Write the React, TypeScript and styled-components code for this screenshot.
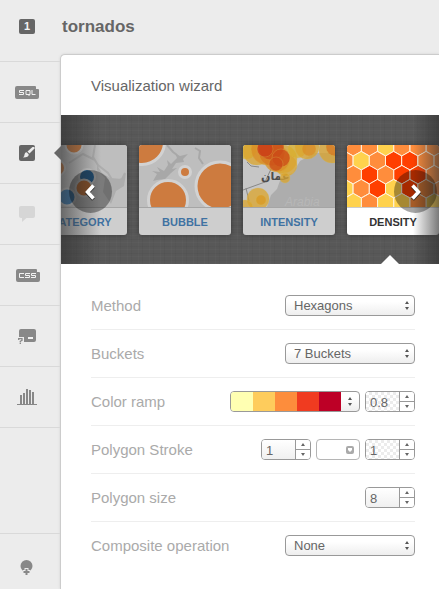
import React, { useState } from "react";
import styled, { createGlobalStyle, css } from "styled-components";

const GlobalStyle = createGlobalStyle`
  * { box-sizing: border-box; }
  body {
    margin: 0;
    background: #ececec;
    font-family: "Liberation Sans", Arial, Helvetica, sans-serif;
  }
  button, input, select { font-family: inherit; }
`;

const Page = styled.div`
  display: flex;
  min-height: 100vh;
`;

/* ---------- left tool rail ---------- */

const Rail = styled.nav`
  display: flex;
  flex-direction: column;
  flex: none;
  width: 60px;
`;

const RailButton = styled.button<{ $first?: boolean; $last?: boolean }>`
  position: relative;
  display: flex;
  align-items: center;
  justify-content: center;
  width: 100%;
  height: ${(p) => (p.$first ? 62 : 61)}px;
  padding: 0 6px 0 0;
  border: 0;
  border-bottom: 1px solid #d9d9d9;
  background: none;
  cursor: pointer;
  ${(p) => p.$first && css`padding-bottom: 8px;`}
  ${(p) =>
    p.$last &&
    css`
      height: 56px;
      margin-top: auto;
      padding: 12px 8px 0 0;
      border-top: 1px solid #d9d9d9;
      border-bottom: 0;
    `}
  svg { display: block; }
`;

const Pointer = styled.svg`
  position: absolute;
  z-index: 2;
  right: -1px;
  top: 23px;
`;

const NumberBadge = styled.span`
  width: 16px;
  height: 15px;
  border-radius: 2px;
  background: #666;
  color: #f4f4f4;
  font-size: 11px;
  font-weight: bold;
  line-height: 15px;
  text-align: center;
`;

/* ---------- main column ---------- */

const Main = styled.main`
  display: flex;
  flex-direction: column;
  flex: 1;
  min-width: 0;
`;

const Title = styled.h1`
  margin: 0;
  padding: 0 2px;
  height: 54px;
  color: #666;
  font-size: 17px;
  line-height: 53px;
`;

const Panel = styled.section`
  flex: 1;
  overflow: hidden;
  border: solid #ccc;
  border-width: 1px 0 0 1px;
  border-top-left-radius: 5px;
  background: #fff;
  box-shadow: 0 0 3px rgba(0, 0, 0, 0.1);
`;

const PanelTitle = styled.h2`
  margin: 0;
  padding: 0 30px;
  color: #666;
  font-size: 15px;
  font-weight: normal;
  line-height: 62px;
  height: 60px;
`;

const Carousel = styled.div`
  position: relative;
  height: 149px;
  padding: 30px 0;
  overflow: hidden;
  background:
    repeating-linear-gradient(90deg, rgba(255, 255, 255, 0.02) 0 1px, transparent 1px 4px, rgba(0, 0, 0, 0.03) 4px 5px, transparent 5px 11px),
    repeating-linear-gradient(0deg, rgba(255, 255, 255, 0.02) 0 1px, transparent 1px 3px, rgba(0, 0, 0, 0.03) 3px 4px, transparent 4px 7px),
    #585858;
`;

const Track = styled.div`
  display: flex;
  gap: 12px;
  margin-left: -26px;
`;

const Card = styled.button<{ $active: boolean }>`
  display: flex;
  flex-direction: column;
  flex: none;
  width: 92px;
  height: 90px;
  padding: 0;
  overflow: hidden;
  border: 0;
  border-radius: 3px;
  background: ${(p) => (p.$active ? "#fff" : "#cecece")};
  box-shadow: 0 0 5px rgba(0, 0, 0, 0.4);
  color: ${(p) => (p.$active ? "#333" : "#3f72a2")};
  cursor: pointer;
  svg { display: block; flex: none; }
`;

const CardName = styled.span<{ $active: boolean }>`
  width: 100%;
  border-top: 1px solid ${(p) => (p.$active ? "#ccc" : "#a5a5a5")};
  font-size: 11px;
  font-weight: bold;
  line-height: 28px;
  text-align: center;
`;

const Fade = styled.div<{ $side: "left" | "right" }>`
  position: absolute;
  top: 0;
  bottom: 0;
  ${(p) => p.$side}: 0;
  width: ${(p) => (p.$side === "left" ? 40 : 26)}px;
  background: linear-gradient(
    to ${(p) => p.$side},
    rgba(50, 50, 50, 0),
    rgba(50, 50, 50, 0.65)
  );
  pointer-events: none;
`;

const Arrow = styled.button<{ $side: "left" | "right" }>`
  position: absolute;
  top: 55px;
  ${(p) => (p.$side === "left" ? "left: 8px" : "right: 2px")};
  display: flex;
  align-items: center;
  justify-content: center;
  width: 43px;
  height: 43px;
  padding: 0;
  border: 0;
  border-radius: 50%;
  background: rgba(0, 0, 0, 0.35);
  cursor: pointer;
`;

const Notch = styled.svg`
  position: absolute;
  right: 40px;
  bottom: 0;
`;

/* ---------- form ---------- */

const Form = styled.form`
  padding: 18px 24px 16px 30px;
`;

const Row = styled.div`
  display: flex;
  align-items: center;
  justify-content: space-between;
  height: 48px;
  border-bottom: 1px solid #eee;
  &:last-child { border-bottom-color: transparent; }
`;

const RowLabel = styled.label`
  color: #aaa;
  font-size: 15px;
`;

const Controls = styled.div`
  display: flex;
  gap: 5px;
`;

const SelectBox = styled.div`
  position: relative;
  width: 130px;
  height: 21px;
  svg { position: absolute; right: 6px; top: 6px; pointer-events: none; }
`;

const Select = styled.select`
  width: 100%;
  height: 100%;
  padding: 0 20px 0 8px;
  appearance: none;
  border: 1px solid #999;
  border-radius: 4px;
  background: linear-gradient(#fff 30%, #eee);
  color: #666;
  font-size: 13px;
`;

const checks = css`
  background-color: #fff;
  background-image: repeating-conic-gradient(#ececec 0 25%, #fff 0 50%);
  background-size: 6px 6px;
`;

const SpinnerBox = styled.div`
  display: flex;
  width: 50px;
  height: 21px;
  overflow: hidden;
  border: 1px solid #999;
  border-radius: 4px;
`;

const SpinnerInput = styled.input<{ $checked?: boolean }>`
  flex: 1;
  min-width: 0;
  padding: 2px 0 0 4px;
  border: 0;
  color: #666;
  font-size: 13px;
  background: linear-gradient(#fff, #f0f0f0);
  ${(p) => p.$checked && checks}
`;

const Steps = styled.div`
  display: flex;
  flex-direction: column;
  width: 15px;
  border-left: 1px solid #999;
`;

const Step = styled.button`
  display: flex;
  flex: 1;
  align-items: center;
  justify-content: center;
  padding: 0;
  border: 0;
  background: #fff;
  & + & { border-top: 1px solid #999; }
`;

const Ramp = styled.button`
  display: flex;
  width: 130px;
  height: 21px;
  padding: 0;
  overflow: hidden;
  border: 1px solid #999;
  border-radius: 4px;
  background: linear-gradient(#fff 30%, #eee);
`;

const Swatch = styled.span<{ $color: string }>`
  width: 22px;
  height: 100%;
  background: ${(p) => p.$color};
`;

const RampArrows = styled.span`
  display: flex;
  flex: 1;
  align-items: center;
  justify-content: center;
  height: 100%;
`;

const ColorButton = styled.button`
  display: flex;
  align-items: center;
  justify-content: flex-end;
  width: 44px;
  height: 21px;
  padding: 0 5px;
  border: 1px solid #b5b5b5;
  border-radius: 4px;
  background: #fff;
`;

/* ---------- icons ---------- */

const SqlIcon = () => (
  <svg width="24" height="13" viewBox="0 0 24 13">
    <path d="M2 0h18q1 0 1 1v2h2q1 0 1 1v7q0 2-2 2H2q-2 0-2-2V2q0-2 2-2z" fill="#888" />
    <path d="M9 4.500H4.500v2H8.500v2H4M11 4.500h4v4h-4zM14 8.500v1.500M17 4v4.500h3.500" fill="none" stroke="#f2f2f2" />
  </svg>
);

const CssIcon = () => (
  <svg width="26" height="13" viewBox="-2 0 26 13">
    <path d="M2 0h18q1 0 1 1v2h2q1 0 1 1v7q0 2-2 2H2q-2 0-2-2V2q0-2 2-2z" fill="#888" />
    <path d="M8 4.500H3.500v4H8M14 4.500H9.500v2h4v2H9M20 4.500h-4.500v2h4v2H15" fill="none" stroke="#f2f2f2" />
  </svg>
);

const BrushIcon = () => (
  <svg width="16" height="16" viewBox="0 0 16 16">
    <rect width="16" height="16" rx="2" fill="#666" />
    <path d="M15 2 16 3 10.500 8.500 8.500 6.500 13.500 2z" fill="#ececec" />
    <path d="M7.700 7.300 9.700 9.300Q10 12.500 4 12.500 5.500 11.500 5.500 9.500 5.700 7.300 7.700 7.300z" fill="#ececec" />
  </svg>
);

const BubbleIcon = () => (
  <svg width="16" height="16" viewBox="0 0 16 16">
    <path d="M2 0h12q2 0 2 2v8q0 2-2 2H7.500L3 16v-4H2q-2 0-2-2V2q0-2 2-2z" fill="#d6d6d6" />
  </svg>
);

const HintIcon = () => (
  <svg width="18" height="15" viewBox="0 0 18 15">
    <path d="M3 0h13q2 0 2 2v9q0 2-2 2H6V8H1V2q0-2 2-2z" fill="#888" />
    <rect x="10" y="8" width="5" height="2" fill="#f2f2f2" />
    <path d="M.7 11V9.700h3.300v1.700L2.300 12.300v.9M2.300 13.800v1.200" fill="none" stroke="#888" strokeWidth="1.300" />
  </svg>
);

const BarsIcon = () => (
  <svg width="20" height="16" viewBox="0 0 20 16" fill="#888">
    <path d="M0 15h20v1H0zM3 6h2v9H3zM6 4h2v11H6zM9 0h2v15H9zM12 1h2v14h-2zM15 3h2v12h-2z" />
  </svg>
);

const AddIcon = () => (
  <svg width="13" height="16" viewBox="0 0 13 16">
    <circle cx="6.500" cy="6" r="6" fill="#888" />
    <path d="M6.500 8v8M2.500 12h8" stroke="#ececec" strokeWidth="4" />
    <path d="M6.500 9v6M3.500 12h6" stroke="#888" strokeWidth="2" />
  </svg>
);

const SelectArrows = () => (
  <svg width="4" height="9" viewBox="0 0 4 9" fill="#555">
    <path d="M0 3 2 0 4 3zM0 6h4L2 9z" />
  </svg>
);

const Tick = ({ up }: { up?: boolean }) => (
  <svg width="4" height="3" viewBox="0 0 4 3" fill="#666">
    <path d={up ? "M0 3 2 0 4 3z" : "M0 0h4L2 3z"} />
  </svg>
);

const Chevron = ({ left }: { left?: boolean }) => {
  const d = left ? "M10.500 2.500 4.500 9l6 6.500" : "M4.500 2.500 10.500 9l-6 6.500";
  return (
    <svg width="15" height="18" viewBox="0 0 15 18" fill="none">
      <path d={d} stroke="#222" strokeWidth="4" transform="translate(0 1)" opacity=".8" />
      <path d={d} stroke="#fff" strokeWidth="3.500" />
    </svg>
  );
};

/* ---------- card thumbnails ---------- */

const CategoryThumb = () => (
  <svg width="92" height="62" viewBox="0 0 92 62">
    <rect width="92" height="62" fill="#bebebe" />
    <path d="M60 0l-2 12 5 8 10 8 6 10 8-4 3-6M34 18l14-9 12 6" fill="none" stroke="#adadad" strokeWidth="2" />
    <path d="M62 20l5 8 8 5 12 1 4-6-2 13-8 5-5 13-8-12 2-14-8-8z" fill="#adadad" />
    <g stroke="#cfcfcf" strokeWidth="2">
      <circle cx="39" cy="0" r="8.500" fill="#cd7b3f" />
      <circle cx="22" cy="23" r="8" fill="#cd7b3f" />
      <circle cx="52" cy="32" r="8" fill="#2f6fa5" />
      <circle cx="49" cy="43" r="8.500" fill="#cd7b3f" />
      <circle cx="32" cy="52" r="8.500" fill="#3c7db5" />
    </g>
  </svg>
);

const BubbleThumb = () => (
  <svg width="92" height="62" viewBox="0 0 92 62">
    <rect width="92" height="62" fill="#bebebe" />
    <path d="M14 36l4-7-5-3 8 1-3-5 7 4 4-6-1-5 4 4 6-6-2-5 5 3 8-2-5 5 1 3-8 1-4 6 5-1-6 5-6 6-8 1z" fill="#a8a8a8" />
    <path d="M56 3l5 3-1 7 4 6M28 0l6 7 4 3" fill="none" stroke="#a8a8a8" strokeWidth="2" />
    <g fill="#cd7b3f" stroke="#d2d2d2" strokeWidth="3">
      <circle cx="3" cy="-3" r="22.500" />
      <circle cx="46" cy="27" r="5.500" />
      <circle cx="29" cy="55" r="19.500" />
      <circle cx="81" cy="41" r="24" />
    </g>
  </svg>
);

const ArabicText = styled.text`
  font: bold 11px "DejaVu Sans", sans-serif;
`;

const WatermarkText = styled.text`
  font: italic 12px "Liberation Sans", sans-serif;
`;

const heat: [number, number, number, string][] = [
  [3, 3, 11, "#d9b02c"], [14, 6, 14, "#dba42c"], [40, 14, 14, "#dba42c"],
  [43, 20, 11, "#dba42c"], [24, 4, 16, "#d98c25"], [34, 14, 13, "#d98c25"],
  [29, 8, 13, "#d47720"], [28, 2, 13, "#cb4b18"], [22, 4, 8, "#cb3f18"],
  [38, 13, 9, "#cb4b18"], [33, 19, 7, "#cb4b18"], [54, 4, 9, "#d9b02c"],
  [64, 2, 12, "#dba42c"], [66, 4, 7, "#d98c25"], [89, 5, 13, "#dba42c"],
  [92, 2, 9, "#d47720"], [42, 33, 5, "#dba42c"], [15, 54, 11, "#dba42c"],
  [18, 55, 5, "#d99a20"], [2, 63, 8, "#dba42c"],
];

const IntensityThumb = () => (
  <svg width="92" height="62" viewBox="0 0 92 62">
    <rect width="92" height="62" fill="#c6c6c6" />
    <path d="M24 62l4-12 6-6 4-11 12-5 7-12 15-8h20v54z" fill="#adadad" />
    <path d="M4 17l4 4 8 1M0 45l22-8 6-13M3 43l3 13" fill="none" stroke="#888" />
    <WatermarkText x="42" y="61" fill="#b7b7b7">Arabia</WatermarkText>
    <ArabicText x="18" y="35" fill="#4d4d4d" direction="ltr">عمان</ArabicText>
    {heat.map(([x, y, r, c], i) => (
      <circle key={i} cx={x} cy={y} r={r} fill={c} fillOpacity=".75" stroke="#d9b84b" strokeOpacity=".3" />
    ))}
  </svg>
);

const hexRows = ["OOYOOO", "OYORROO", "ORORROO", "YORYROO", "YOYYOYO"];
const hexFill: Record<string, string> = { O: "#ff8d3c", Y: "#ffd24d", R: "#ff3f00" };

const DensityThumb = () => (
  <svg width="92" height="62" viewBox="0 0 92 62" stroke="#fff3df">
    {hexRows.flatMap((row, r) =>
      [...row].map((c, i) => {
        const x = (r % 2 ? -2 : 6.3) + i * 16.2;
        const y = 1.7 + r * 14;
        return (
          <path
            key={`${r}-${i}`}
            d={`M${x} ${y - 9.3}l8.100 4.600v9.400l-8.100 4.600-8.100-4.600v-9.400z`}
            fill={hexFill[c]}
          />
        );
      })
    )}
  </svg>
);

const cards = [
  { name: "CATEGORY", Thumb: CategoryThumb },
  { name: "BUBBLE", Thumb: BubbleThumb },
  { name: "INTENSITY", Thumb: IntensityThumb },
  { name: "DENSITY", Thumb: DensityThumb },
];

const rampColors = ["#ffffb2", "#fecc5c", "#fd8d3c", "#f03b20", "#bd0026"];

/* ---------- controls ---------- */

function Dropdown({ id, options }: { id: string; options: string[] }) {
  return (
    <SelectBox>
      <Select id={id}>
        {options.map((o) => (
          <option key={o}>{o}</option>
        ))}
      </Select>
      <SelectArrows />
    </SelectBox>
  );
}

type SpinnerProps = { id?: string; label: string; initial: number; step?: number; checked?: boolean };

function Spinner({ id, label, initial, step = 1, checked }: SpinnerProps) {
  const [value, setValue] = useState(String(initial));
  const change = (by: number) =>
    setValue((v) => String(Math.round((Number(v) + by) * 10) / 10));
  return (
    <SpinnerBox>
      <SpinnerInput
        id={id}
        aria-label={id ? undefined : label}
        $checked={checked}
        value={value}
        onChange={(e) => setValue(e.target.value)}
      />
      <Steps>
        <Step type="button" aria-label={`Increase ${label}`} onClick={() => change(step)}>
          <Tick up />
        </Step>
        <Step type="button" aria-label={`Decrease ${label}`} onClick={() => change(-step)}>
          <Tick />
        </Step>
      </Steps>
    </SpinnerBox>
  );
}

export default function App() {
  const [active, setActive] = useState("DENSITY");
  return (
    <Page>
      <GlobalStyle />
      <Rail aria-label="Layer tools">
        <RailButton $first aria-label="Layer 1"><NumberBadge>1</NumberBadge></RailButton>
        <RailButton aria-label="SQL"><SqlIcon /></RailButton>
        <RailButton aria-label="Wizards">
          <BrushIcon />
          <Pointer width="7" height="14" viewBox="0 0 7 14">
            <path d="M7 0v14L0 7z" fill="#666" />
          </Pointer>
        </RailButton>
        <RailButton aria-label="Infowindow"><BubbleIcon /></RailButton>
        <RailButton aria-label="CSS"><CssIcon /></RailButton>
        <RailButton aria-label="Legends"><HintIcon /></RailButton>
        <RailButton aria-label="Filters"><BarsIcon /></RailButton>
        <RailButton $last aria-label="Add feature"><AddIcon /></RailButton>
      </Rail>
      <Main>
        <Title>tornados</Title>
        <Panel>
          <PanelTitle>Visualization wizard</PanelTitle>
          <Carousel>
            <Track>
              {cards.map(({ name, Thumb }) => (
                <Card key={name} type="button" $active={active === name} onClick={() => setActive(name)}>
                  <Thumb />
                  <CardName $active={active === name}>{name}</CardName>
                </Card>
              ))}
            </Track>
            <Fade $side="left" />
            <Fade $side="right" />
            <Arrow type="button" $side="left" aria-label="Previous"><Chevron left /></Arrow>
            <Arrow type="button" $side="right" aria-label="Next"><Chevron /></Arrow>
            <Notch width="18" height="9" viewBox="0 0 18 9">
              <path d="M0 9 9 0l9 9z" fill="#fff" />
            </Notch>
          </Carousel>
          <Form>
            <Row>
              <RowLabel htmlFor="method">Method</RowLabel>
              <Dropdown id="method" options={["Hexagons", "Rectangles"]} />
            </Row>
            <Row>
              <RowLabel htmlFor="buckets">Buckets</RowLabel>
              <Dropdown id="buckets" options={["7 Buckets", "5 Buckets", "3 Buckets"]} />
            </Row>
            <Row>
              <RowLabel htmlFor="ramp">Color ramp</RowLabel>
              <Controls>
                <Ramp id="ramp" type="button">
                  {rampColors.map((c) => (
                    <Swatch key={c} $color={c} />
                  ))}
                  <RampArrows><SelectArrows /></RampArrows>
                </Ramp>
                <Spinner label="ramp opacity" initial={0.8} step={0.1} checked />
              </Controls>
            </Row>
            <Row>
              <RowLabel htmlFor="stroke">Polygon Stroke</RowLabel>
              <Controls>
                <Spinner id="stroke" label="stroke width" initial={1} />
                <ColorButton type="button" aria-label="Stroke color">
                  <svg width="8" height="8" viewBox="0 0 8 8">
                    <rect width="8" height="8" rx="2" fill="#aaa" />
                    <path d="M2 2h4v2L4 6 2 4z" fill="#fff" />
                  </svg>
                </ColorButton>
                <Spinner label="stroke opacity" initial={1} step={0.1} checked />
              </Controls>
            </Row>
            <Row>
              <RowLabel htmlFor="size">Polygon size</RowLabel>
              <Spinner id="size" label="polygon size" initial={8} />
            </Row>
            <Row>
              <RowLabel htmlFor="operation">Composite operation</RowLabel>
              <Dropdown id="operation" options={["None", "Multiply", "Screen"]} />
            </Row>
          </Form>
        </Panel>
      </Main>
    </Page>
  );
}
